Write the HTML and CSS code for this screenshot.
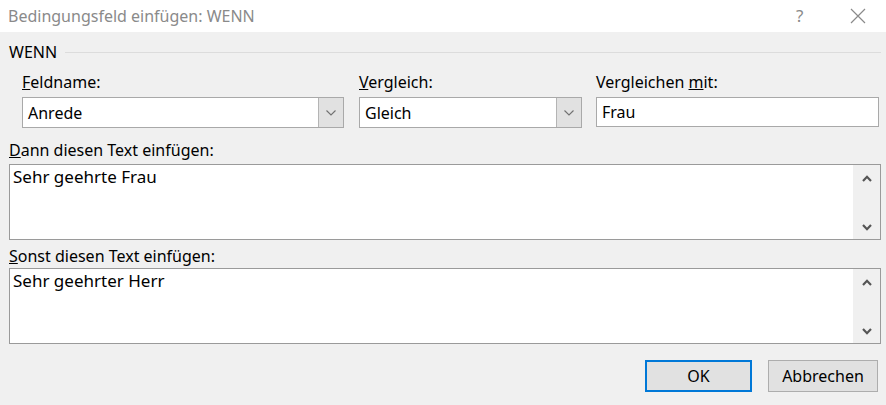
FILE: index.html
```html
<!DOCTYPE html>
<html lang="de">
<head>
  <meta charset="UTF-8">
  <title>Bedingungsfeld einfügen: WENN</title>
  <link rel="stylesheet" href="styles.css">
</head>
<body>
  <div class="titlebar">
    <span class="title">Bedingungsfeld einfügen: WENN</span>
    <span class="help">?</span>
    <svg class="close" width="16" height="16" viewBox="0 0 16 16">
      <path d="M1 1 L15 15 M15 1 L1 15" stroke="#8a8a8a" stroke-width="1.2" fill="none"/>
    </svg>
  </div>

  <div class="dialog">
    <div class="group">
      <span>WENN</span>
      <div class="rule"></div>
    </div>

    <div class="fields">
      <div class="field f-name">
        <label><u>F</u>eldname:</label>
        <div class="combo">
          <span class="value">Anrede</span>
          <span class="drop">
            <svg width="10" height="6" viewBox="0 0 10 6"><path d="M0.5 0.5 L5 5 L9.5 0.5" stroke="#707070" stroke-width="1.1" fill="none"/></svg>
          </span>
        </div>
      </div>
      <div class="field f-cmp">
        <label><u>V</u>ergleich:</label>
        <div class="combo">
          <span class="value">Gleich</span>
          <span class="drop">
            <svg width="10" height="6" viewBox="0 0 10 6"><path d="M0.5 0.5 L5 5 L9.5 0.5" stroke="#707070" stroke-width="1.1" fill="none"/></svg>
          </span>
        </div>
      </div>
      <div class="field f-with">
        <label>Vergleichen <u>m</u>it:</label>
        <div class="input"><span class="value">Frau</span></div>
      </div>
    </div>

    <label class="area-label then"><u>D</u>ann diesen Text einfügen:</label>
    <div class="textbox">
      <div class="text">Sehr geehrte Frau</div>
      <div class="scroll">
        <svg width="10" height="7" viewBox="0 0 10 7"><path d="M1 6 L5 1.8 L9 6" stroke="#555" stroke-width="2.2" fill="none"/></svg>
        <svg width="10" height="7" viewBox="0 0 10 7"><path d="M1 1 L5 5.2 L9 1" stroke="#555" stroke-width="2.2" fill="none"/></svg>
      </div>
    </div>

    <label class="area-label else"><u>S</u>onst diesen Text einfügen:</label>
    <div class="textbox">
      <div class="text">Sehr geehrter Herr</div>
      <div class="scroll">
        <svg width="10" height="7" viewBox="0 0 10 7"><path d="M1 6 L5 1.8 L9 6" stroke="#555" stroke-width="2.2" fill="none"/></svg>
        <svg width="10" height="7" viewBox="0 0 10 7"><path d="M1 1 L5 5.2 L9 1" stroke="#555" stroke-width="2.2" fill="none"/></svg>
      </div>
    </div>

    <div class="buttons">
      <button class="btn default">OK</button>
      <button class="btn cancel">Abbrechen</button>
    </div>
  </div>
</body>
</html>
```

FILE: styles.css
```css
body {
  margin: 0;
  width: 886px;
  height: 405px;
  background: #f0f0f0;
  font-family: "Noto Sans", "Open Sans", sans-serif;
  font-size: 16px;
  line-height: 18px;
  color: #000;
  overflow: hidden;
}

.titlebar {
  height: 32px;
  background: #fff;
  display: flex;
  align-items: center;
  padding-left: 8px;
}
.title { color: #8a8a8a; font-size: 16px; flex: 1; }
.help { color: #8a8a8a; font-size: 17px; width: 20px; margin-right: 34px; }
.close { margin-right: 20px; }

.dialog {
  padding: 11px 5px 0 9px;
  display: flex;
  flex-direction: column;
}

.group {
  display: flex;
  align-items: center;
  height: 18px;
}
.group .rule {
  flex: 1;
  height: 1px;
  background: #dcdcdc;
  margin-left: 8px;
}

.fields {
  display: flex;
  padding-left: 13px;
  margin-top: 12px;
}
.field { display: flex; flex-direction: column; }
.field label { height: 18px; margin-bottom: 6px; }
.f-name { width: 322px; margin-right: 15px; }
.f-cmp { width: 223px; margin-right: 14px; }
.f-with { width: 283px; }

.combo, .input {
  height: 31px;
  box-sizing: border-box;
  border: 1px solid #a9a9a9;
  background: #fff;
  display: flex;
  align-items: center;
}
.input { height: 30px; }
.value { flex: 1; padding-left: 5px; }
.drop {
  width: 24px;
  align-self: stretch;
  background: #e1e1e1;
  border-left: 1px solid #b4b4b4;
  display: flex;
  align-items: center;
  justify-content: center;
}

.area-label { height: 18px; }
.area-label.then { margin-top: 13px; margin-bottom: 5px; }
.area-label.else { margin-top: 7px; margin-bottom: 3px; }

.textbox {
  height: 76px;
  box-sizing: border-box;
  border: 1px solid #9a9a9a;
  background: #fff;
  display: flex;
}
.textbox .text { flex: 1; padding: 2px 0 0 3px; font-size: 17px; line-height: 20px; }
.scroll {
  width: 27px;
  background: #f0f0f0;
  display: flex;
  flex-direction: column;
  justify-content: space-between;
  align-items: center;
  padding: 10px 0 8px;
}

.buttons {
  display: flex;
  justify-content: flex-end;
  gap: 16px;
  margin-top: 16px;
  padding-right: 3px;
}
.btn {
  font: inherit;
  font-size: 16px;
  color: #000;
  height: 32px;
  background: #e1e1e1;
  border: 1px solid #adadad;
}
.btn.default { border: 2px solid #0078d7; width: 107px; }
.btn.cancel { width: 110px; }
```
